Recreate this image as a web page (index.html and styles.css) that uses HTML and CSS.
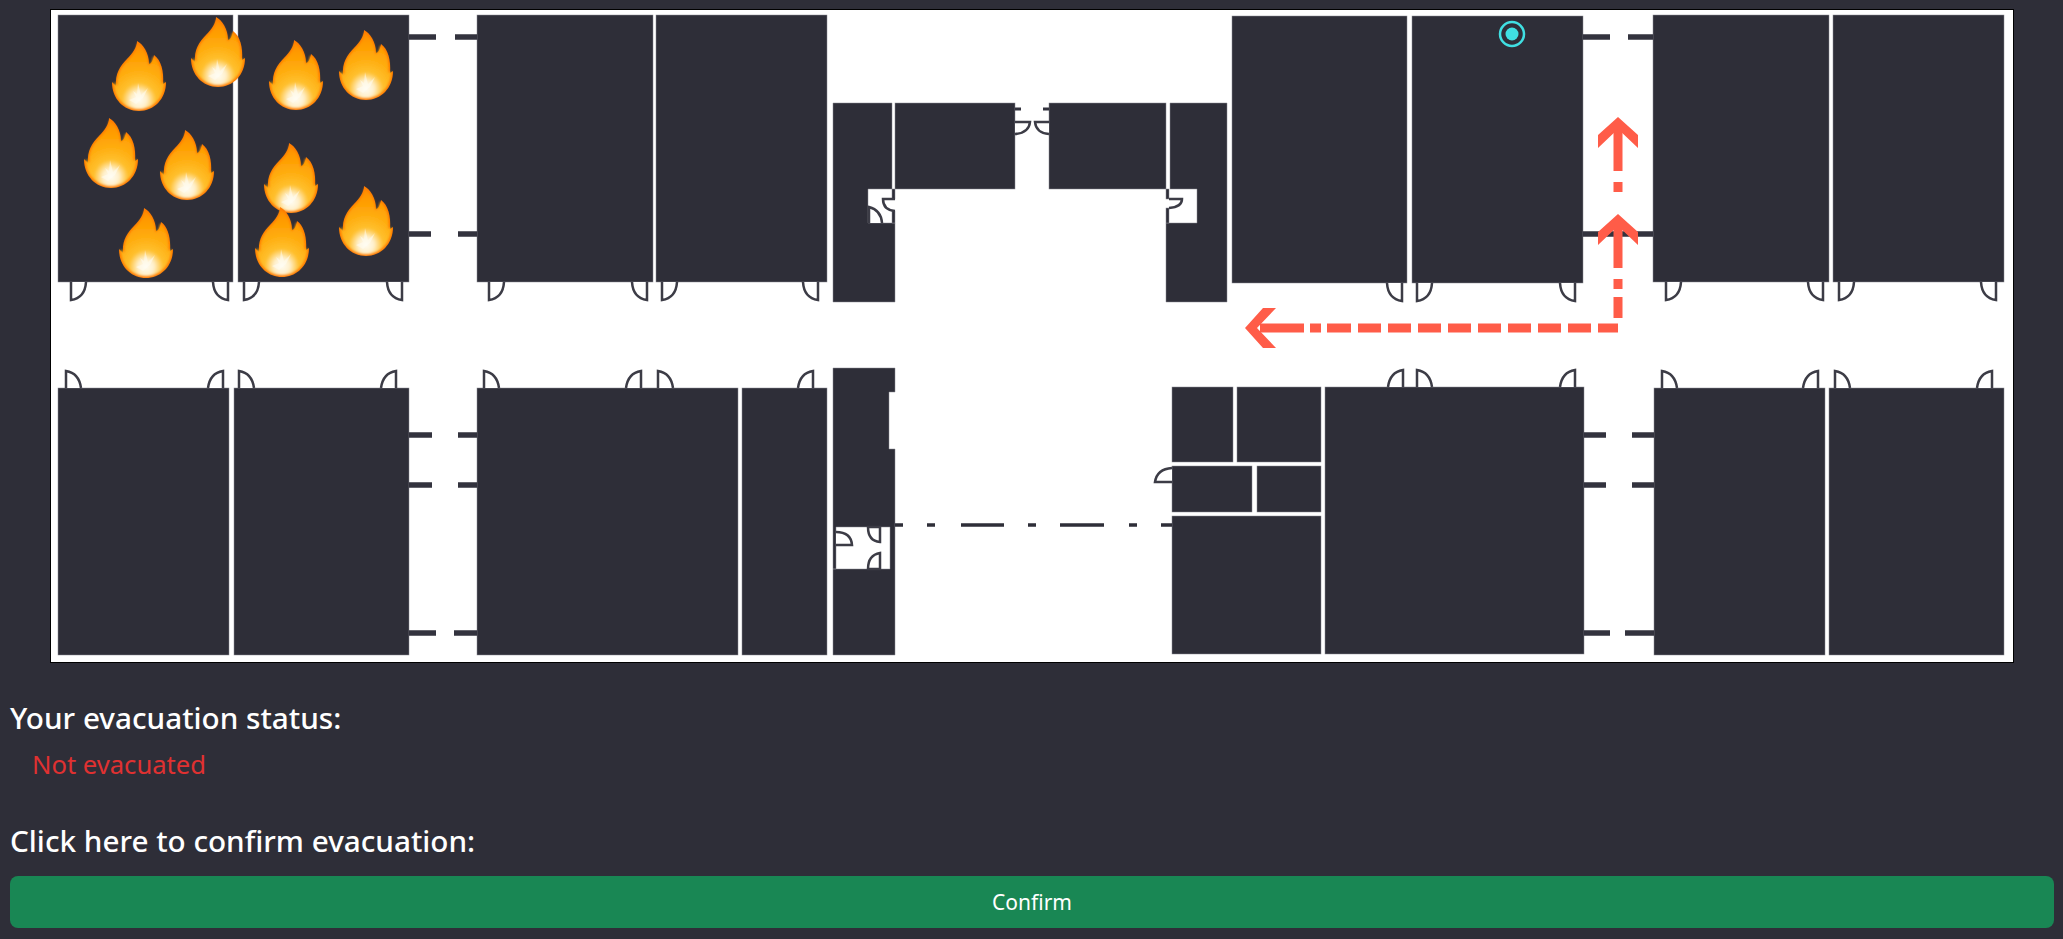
FILE: index.html
```html
<!DOCTYPE html>
<html lang="en">
<head>
    <meta charset="UTF-8">
    <meta name="viewport" content="width=device-width, initial-scale=1.0">
    <title>Evacuation</title>
    <link rel="stylesheet" href="styles.css">
</head>
<body>

<svg class="map" viewBox="51 10 1962 652" role="img" aria-label="Floor plan">
    <defs>
        <path id="door-dl" d="M0 0V18Q14 16 15 0"/>
        <path id="door-dr" d="M0 0V18Q-14 16 -15 0"/>
        <path id="door-ul" d="M0 0V-17Q13 -15 15 0"/>
        <path id="door-ur" d="M0 0V-17Q-13 -15 -15 0"/>
        <radialGradient id="flame-fill" gradientUnits="userSpaceOnUse" cx="27" cy="60" r="60">
            <stop offset="0" stop-color="#fffdf4"/>
            <stop offset="0.14" stop-color="#fff0cc"/>
            <stop offset="0.3" stop-color="#ffc02e"/>
            <stop offset="0.55" stop-color="#ffab0c"/>
            <stop offset="0.85" stop-color="#ff9800"/>
            <stop offset="1" stop-color="#ff8800"/>
        </radialGradient>
        <filter id="flame-soft" x="-10%" y="-10%" width="120%" height="120%">
            <feGaussianBlur stdDeviation="1"/>
        </filter>
        <symbol id="flame" viewBox="0 0 54 70" overflow="visible">
            <path fill="#ff7a00" d="M25 0C31 3 37 12 37 23C39 23 41 20 42 14C49 19 52 30 51 43L54 41C54 58 42 70 27 70C12 70 0 58 0 41L4 45C3 33 8 25 15 18C21 12 25 6 25 0Z"/>
            <path fill="url(#flame-fill)" filter="url(#flame-soft)" transform="translate(1.6 2.4) scale(.94)" d="M25 0C31 3 37 12 37 23C39 23 41 20 42 14C49 19 52 30 51 43L54 41C54 58 42 70 27 70C12 70 0 58 0 41L4 45C3 33 8 25 15 18C21 12 25 6 25 0Z"/>
            <path fill="#fffdf5" fill-opacity="0.5" d="M26 42L29 54L36 47L31 57L24 63L17 59L24 56L21 50L25 53Z"/>
        </symbol>
    </defs>

    <!-- top row rooms -->
    <g class="rooms">
        <rect x="58" y="15" width="175" height="267"/>
        <rect x="238" y="15" width="171" height="267"/>
        <rect x="477" y="15" width="176" height="267"/>
        <rect x="656" y="15" width="171" height="267"/>
        <rect x="1232" y="16" width="175" height="267"/>
        <rect x="1412" y="16" width="171" height="267"/>
        <rect x="1653" y="15" width="176" height="267"/>
        <rect x="1833" y="15" width="171" height="267"/>

        <!-- centre, top -->
        <path d="M833 103H892V189H868V223H895V302H833Z"/>
        <rect x="895" y="103" width="120" height="86"/>
        <rect x="892" y="189" width="3" height="10"/>
        <rect x="892" y="211" width="3" height="12"/>
        <rect x="1049" y="103" width="117" height="86"/>
        <path d="M1170 103H1227V302H1166V223H1197V189H1170Z"/>
        <rect x="1166" y="189" width="3" height="10"/>
        <rect x="1166" y="208" width="3" height="15"/>

        <!-- bottom row rooms -->
        <rect x="58" y="388" width="171" height="267"/>
        <rect x="234" y="388" width="175" height="267"/>
        <rect x="477" y="388" width="261" height="267"/>
        <rect x="742" y="388" width="85" height="267"/>
        <rect x="1654" y="388" width="171" height="267"/>
        <rect x="1829" y="388" width="175" height="267"/>

        <!-- centre, bottom -->
        <path d="M833 368H895V392H889V449H895V655H833V569H890V527H836V569H833Z"/>
        <rect x="1172" y="387" width="61" height="75"/>
        <rect x="1237" y="387" width="84" height="75"/>
        <rect x="1172" y="466" width="80" height="46"/>
        <rect x="1257" y="466" width="64" height="46"/>
        <rect x="1172" y="516" width="149" height="138"/>
        <rect x="1325" y="387" width="259" height="267"/>
    </g>

    <!-- wall stubs between the blocks -->
    <g class="stubs">
        <path d="M409 37H436M455 37H477M409 234H431M458 234H477"/>
        <path d="M1583 37H1610M1628 37H1653M1583 234H1653"/>
        <path d="M409 435H432M458 435H477M409 485H432M458 485H477M409 633H436M454 633H477"/>
        <path d="M1584 435H1606M1632 435H1654M1584 485H1606M1632 485H1654M1584 633H1610M1625 633H1654"/>
        <path class="stub-thin" d="M1015 109H1021M1043 109H1049"/>
    </g>
    <path class="line" d="M895 525H903M927 525H935M961 525H1004M1028 525H1036M1060 525H1104M1129 525H1137M1161 525H1172"/>

    <!-- doors under the top row -->
    <g class="doors">
        <use href="#door-dl" x="71" y="282"/>
        <use href="#door-dr" x="228" y="282"/>
        <use href="#door-dl" x="244" y="282"/>
        <use href="#door-dr" x="402" y="282"/>
        <use href="#door-dl" x="489" y="282"/>
        <use href="#door-dr" x="647" y="282"/>
        <use href="#door-dl" x="662" y="282"/>
        <use href="#door-dr" x="818" y="282"/>
        <use href="#door-dr" x="1402" y="283"/>
        <use href="#door-dl" x="1417" y="283"/>
        <use href="#door-dr" x="1575" y="283"/>
        <use href="#door-dl" x="1666" y="282"/>
        <use href="#door-dr" x="1823" y="282"/>
        <use href="#door-dl" x="1839" y="282"/>
        <use href="#door-dr" x="1996" y="282"/>

        <!-- doors above the bottom row -->
        <use href="#door-ul" x="66" y="388"/>
        <use href="#door-ur" x="223" y="388"/>
        <use href="#door-ul" x="239" y="388"/>
        <use href="#door-ur" x="396" y="388"/>
        <use href="#door-ul" x="484" y="388"/>
        <use href="#door-ur" x="641" y="388"/>
        <use href="#door-ul" x="658" y="388"/>
        <use href="#door-ur" x="813" y="388"/>
        <use href="#door-ur" x="1403" y="387"/>
        <use href="#door-ul" x="1417" y="387"/>
        <use href="#door-ur" x="1575" y="387"/>
        <use href="#door-ul" x="1662" y="388"/>
        <use href="#door-ur" x="1818" y="388"/>
        <use href="#door-ul" x="1835" y="388"/>
        <use href="#door-ur" x="1992" y="388"/>

        <!-- centre doors -->
        <path d="M1015 122H1030Q1029 133 1015 134"/>
        <path d="M1049 122H1035Q1036 133 1049 134"/>
        <path d="M869 223V207Q881 210 882 223"/>
        <path d="M895 199H883Q883 210 895 211"/>
        <path d="M1169 199H1182Q1182 207 1169 208"/>
        <path d="M836 532Q851 532 852 545H836"/>
        <path d="M880 527H868Q868 541 880 542Z"/>
        <path d="M880 569H868Q868 555 880 553Z"/>
        <path d="M1172 482H1155Q1157 469 1172 468"/>
    </g>

    <!-- fires -->
    <use href="#flame" x="112" y="41" width="54" height="70"/>
    <use href="#flame" x="191" y="17" width="54" height="70"/>
    <use href="#flame" x="269" y="40" width="54" height="70"/>
    <use href="#flame" x="339" y="30" width="54" height="70"/>
    <use href="#flame" x="84" y="118" width="54" height="70"/>
    <use href="#flame" x="160" y="130" width="54" height="70"/>
    <use href="#flame" x="264" y="143" width="54" height="70"/>
    <use href="#flame" x="119" y="208" width="54" height="70"/>
    <use href="#flame" x="255" y="207" width="54" height="70"/>
    <use href="#flame" x="339" y="186" width="54" height="70"/>

    <!-- you are here -->
    <circle class="marker-ring" cx="1512" cy="34" r="12"/>
    <circle class="marker-dot" cx="1512" cy="34" r="6.5"/>

    <!-- exit route -->
    <g class="route">
        <path d="M1618 125V171M1618 182V192"/>
        <path d="M1618 222V268M1618 279V289M1618 297V318M1618 328H1598M1591 328H1568M1561 328H1538M1531 328H1508M1501 328H1478M1471 328H1448M1441 328H1418M1411 328H1388M1381 328H1358M1351 328H1327M1321 328H1310M1304 328H1260"/>
    </g>
    <g class="route-heads">
        <polygon points="1618,117 1638,135 1638,148 1618,129 1598,148 1598,135"/>
        <polygon points="1618,214 1638,232 1638,245 1618,226 1598,245 1598,232"/>
        <polygon points="1245,328 1263,308 1276,308 1257,328 1276,348 1263,348"/>
    </g>
</svg>

<div class="panel">
    <h4>Your evacuation status:</h4>
    <p class="status">Not evacuated</p>
    <h4>Click here to confirm evacuation:</h4>
    <button class="confirm">Confirm</button>
</div>

</body>
</html>
```

FILE: styles.css
```css
* {
    box-sizing: border-box;
    margin: 0;
    padding: 0;
}

body {
    background-color: #2e2e38;
    color: #fff;
    font-family: 'Noto Sans', sans-serif;
    padding-top: 9px;
}

.map {
    display: block;
    width: 1964px;
    height: 654px;
    margin: 0 auto;
    background-color: #fff;
    border: 1px solid #000;
}

.rooms {
    fill: #2e2e38;
    stroke: #8b8b93;
    stroke-width: 0.5;
}

.stubs {
    fill: none;
    stroke: #33333e;
    stroke-width: 5.5;
}

.stub-thin {
    stroke-width: 3;
}

.line {
    fill: none;
    stroke: #2e2e38;
    stroke-width: 3.5;
}

.doors {
    fill: none;
    stroke: #3c3c46;
    stroke-width: 2.5;
}

.doors use, .doors path {
    fill: #fff;
}

.marker-ring {
    fill: none;
    stroke: #40dfe2;
    stroke-width: 2.5;
}

.marker-dot {
    fill: #40dfe2;
}

.route {
    fill: none;
    stroke: #ff5c48;
    stroke-width: 9;
}

.route-heads {
    fill: #ff5c48;
}

.panel {
    padding: 0 9px 0 10px;
}

h4 {
    font-size: 29.7px;
    font-weight: 500;
    line-height: 36px;
}

h4:first-child {
    margin-top: 37px;
}

.status {
    color: #e03131;
    font-size: 25.6px;
    line-height: 36px;
    padding: 11px 0 0 22px;
    margin-bottom: 40px;
}

.confirm {
    display: block;
    width: 100%;
    height: 52px;
    margin-top: 17px;
    background-color: #198754;
    color: #fff;
    border: none;
    border-radius: 8px;
    font-family: inherit;
    font-size: 21px;
    cursor: pointer;
}
```
